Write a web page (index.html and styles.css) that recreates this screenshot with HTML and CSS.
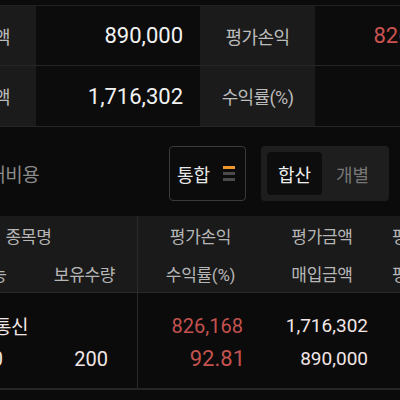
FILE: index.html
```html
<!DOCTYPE html>
<html lang="ko">
<head>
  <meta charset="UTF-8">
  <meta name="viewport" content="width=device-width, initial-scale=1.0">
  <title>잔고</title>
  <link rel="stylesheet" href="styles.css">
</head>
<body>
  <div class="page">
    <!-- 요약 -->
    <div class="summary">
      <div class="sum-row">
        <div class="sum-label">매입금액</div>
        <div class="sum-value">890,000</div>
        <div class="sum-label">평가손익</div>
        <div class="sum-value up">826,168</div>
      </div>
      <div class="sum-row">
        <div class="sum-label">평가금액</div>
        <div class="sum-value">1,716,302</div>
        <div class="sum-label">수익률(%)</div>
        <div class="sum-value up rate">92.81</div>
      </div>
    </div>

    <!-- 필터 -->
    <div class="filter">
      <span class="filter-text">대비용</span>
      <button class="combo">통합 <span class="bars"><i></i><i></i><i></i></span></button>
      <div class="seg">
        <button class="on">합산</button>
        <button>개별</button>
      </div>
    </div>

    <!-- 잔고 테이블 -->
    <div class="thead">
      <div class="col">
        <div class="th">종목명</div>
        <div class="halves">
          <div class="th">매도가능</div>
          <div class="th">보유수량</div>
        </div>
      </div>
      <div class="col line">
        <div class="th">평가손익</div>
        <div class="th">수익률(%)</div>
      </div>
      <div class="col">
        <div class="th">평가금액</div>
        <div class="th">매입금액</div>
      </div>
      <div class="col last">
        <div class="th">평가비중</div>
        <div class="th">평균단가</div>
      </div>
    </div>

    <div class="trow">
      <div class="col">
        <div class="td name">한국정보통신</div>
        <div class="halves">
          <div class="td qty">200</div>
          <div class="td qty">200</div>
        </div>
      </div>
      <div class="col line">
        <div class="td up pl">826,168</div>
        <div class="td up rate">92.81</div>
      </div>
      <div class="col">
        <div class="td amt">1,716,302</div>
        <div class="td amt">890,000</div>
      </div>
      <div class="col last"></div>
    </div>
  </div>
</body>
</html>
```

FILE: styles.css
```css
/* Base */
body {
  margin: 0;
  background-color: #0b0b0b;
  font-family: Roboto, "Noto Sans CJK KR", sans-serif;
  overflow: hidden;
}

/* 화면이 가로로 조금 스크롤된 상태 */
.page {
  width: 549px;
  margin-left: -80px;
}

/* Summary */
.summary {
  margin-top: 5px;
  border-top: 1px solid #202020;
}

.sum-row {
  display: grid;
  grid-template-columns: 116px 164px 115px 154px;
  height: 59px;
  border-bottom: 1px solid #262626;
}

.sum-row:last-child {
  height: 60px;
}

.sum-label {
  display: flex;
  align-items: center;
  justify-content: center;
  background-color: #1b1b1b;
  color: #bcbcbc;
  font-size: 18px;
  letter-spacing: -0.6px;
}

.sum-value {
  display: flex;
  align-items: center;
  justify-content: flex-end;
  padding-right: 17px;
  background-color: #0c0c0c;
  color: #f2f2f2;
  font-size: 22px;
}

.sum-value.up {
  color: #cc5350;
}

.sum-value.rate {
  padding-right: 10px;
}

/* Filter bar */
.filter {
  display: flex;
  align-items: center;
  box-sizing: border-box;
  height: 89px;
  padding: 19px 80px 15px 68px;
}

.filter-text {
  margin-right: auto;
  color: #8a8a8a;
  font-size: 19px;
  letter-spacing: -0.3px;
}

.combo {
  display: flex;
  align-items: center;
  gap: 13px;
  box-sizing: border-box;
  width: 77px;
  height: 55px;
  padding: 0 9px 0 7px;
  border: 1px solid #3a3a3a;
  border-radius: 4px;
  background-color: #0c0c0c;
  color: #e8e8e8;
  font-family: inherit;
  font-size: 18px;
}

.bars {
  display: flex;
  flex-direction: column;
  gap: 3.5px;
}

.bars i {
  display: block;
  width: 12px;
  height: 2.5px;
  background-color: #4a4a4a;
}

.bars i:first-child {
  background-color: #f0952a;
}

.seg {
  display: flex;
  box-sizing: border-box;
  width: 128px;
  height: 55px;
  margin-left: 15px;
  padding: 6px;
  border-radius: 4px;
  background-color: #1e1e1e;
}

.seg button {
  flex: 1;
  border: none;
  border-radius: 4px;
  background: none;
  color: #777;
  font-family: inherit;
  font-size: 18px;
}

.seg .on {
  flex: 0 0 55px;
  background-color: #0d0d0d;
  color: #f0f0f0;
}

/* Table */
.thead,
.trow {
  display: grid;
  grid-template-columns: 217px 126px 118px 88px;
}

.thead {
  background-color: #1a1a1a;
  border-bottom: 1px solid #2a2a2a;
  color: #b6b6b6;
  font-size: 17px;
  letter-spacing: -0.3px;
}

.col.line {
  border-left: 1px solid #2a2a2a;
}

.halves {
  display: grid;
  grid-template-columns: 112px 105px;
}

.th {
  display: flex;
  align-items: center;
  justify-content: center;
  height: 38px;
}

.col.last .th {
  justify-content: flex-start;
  padding-left: 11px;
}

.trow {
  border-bottom: 2px solid #262626;
  color: #f3e6e6;
}

.trow .col {
  padding: 16px 0 13px;
}

.td {
  display: flex;
  align-items: center;
  justify-content: flex-end;
  height: 33px;
  font-size: 19px;
}

.td.name {
  justify-content: flex-start;
  padding-left: 6px;
  letter-spacing: -0.5px;
}

.td.qty {
  padding-right: 29px;
  font-size: 20px;
}

.td.up {
  color: #c4524f;
}

.td.pl {
  padding-right: 20px;
  font-size: 20px;
}

.td.rate {
  padding-right: 18px;
  font-size: 22px;
}

.td.amt {
  padding-right: 13px;
}
```
